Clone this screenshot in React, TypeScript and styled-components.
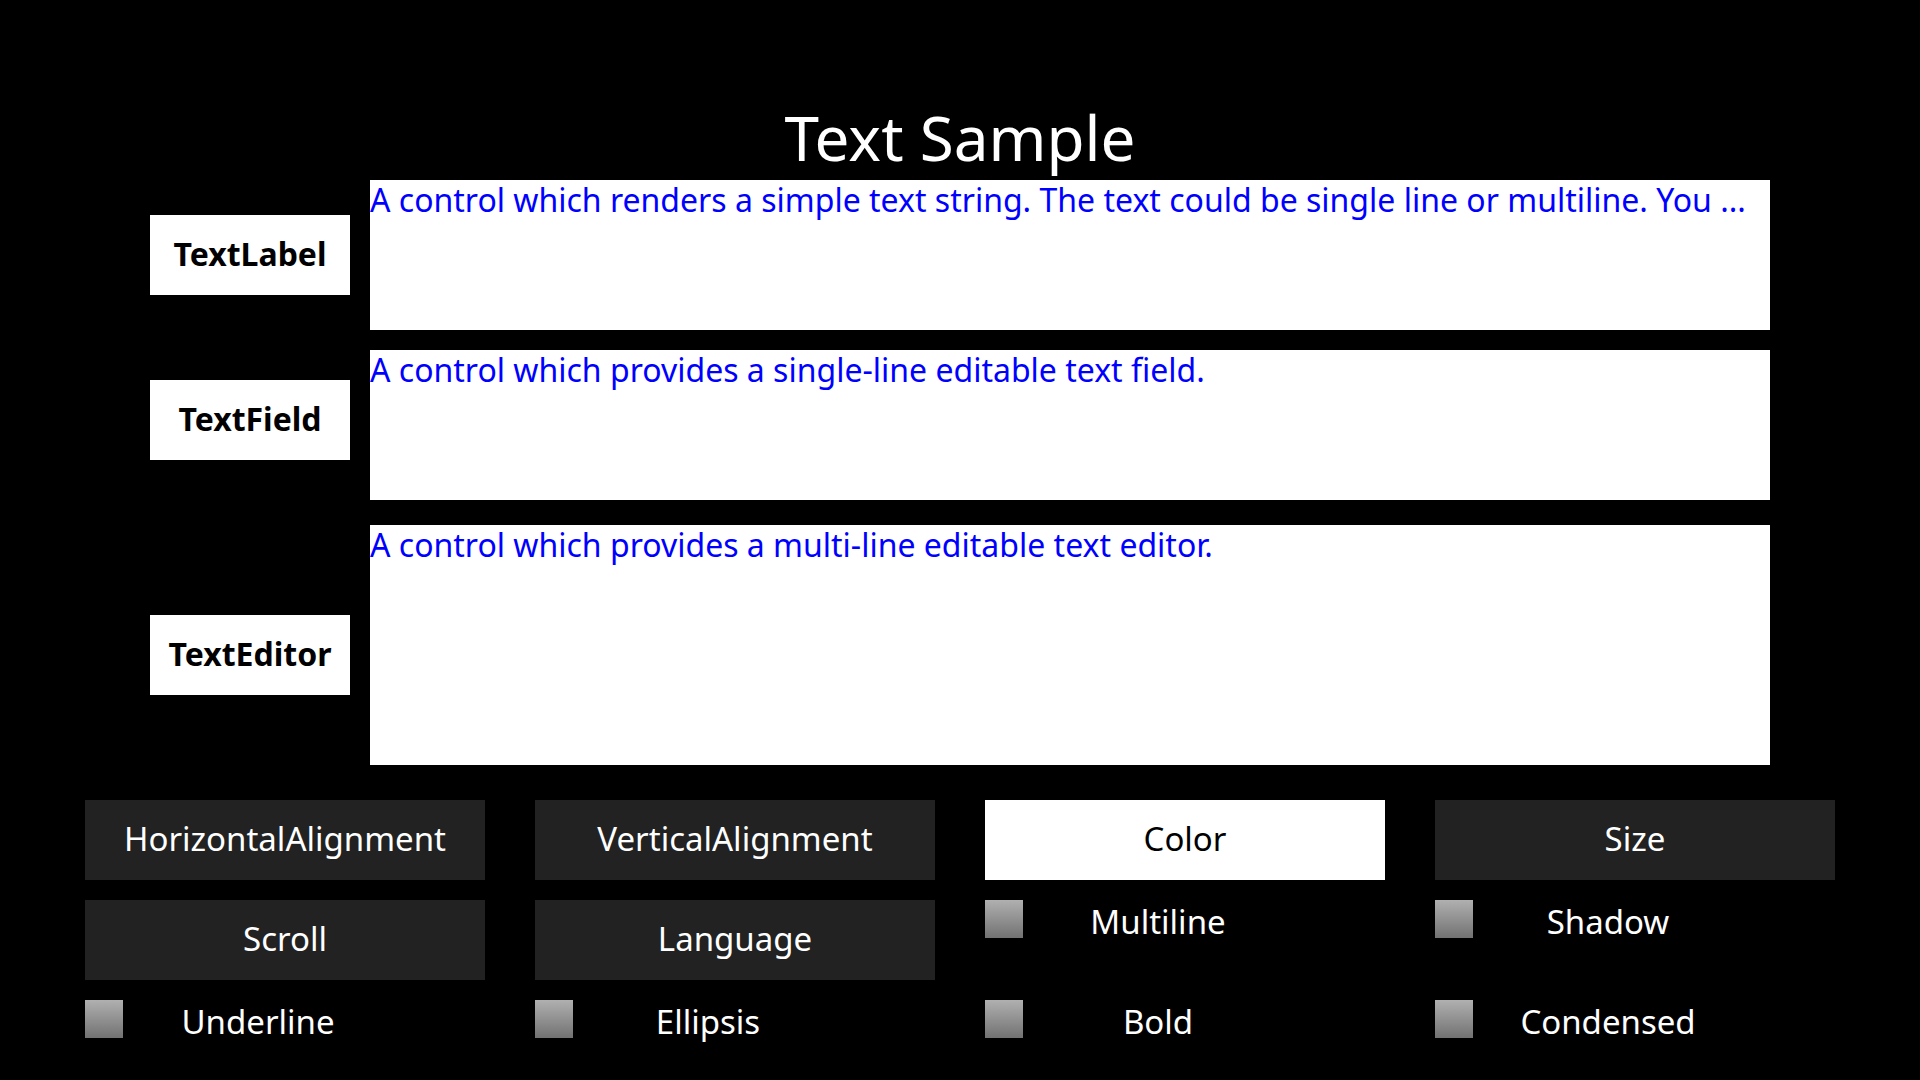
import React from "react";
import styled, { createGlobalStyle } from "styled-components";

const GlobalStyle = createGlobalStyle`
  html, body {
    margin: 0;
    padding: 0;
    background: #000;
  }
  body {
    font-family: "Noto Sans", "Open Sans", sans-serif;
  }
`;

const Page = styled.div`
  width: 1920px;
  height: 1080px;
  background: #000;
  box-sizing: border-box;
  padding-top: 94px;
  display: flex;
  flex-direction: column;
  overflow: hidden;
`;

const Title = styled.h1`
  margin: 0;
  text-align: center;
  color: #fff;
  font-weight: 400;
  font-size: 62px;
  line-height: 86px;
`;

const Samples = styled.div`
  display: flex;
  flex-direction: column;
  padding-left: 150px;
`;

const SampleRow = styled.div<{ $spaceAbove: number }>`
  display: flex;
  align-items: flex-start;
  gap: 20px;
  margin-top: ${(p) => p.$spaceAbove}px;
`;

const NameTag = styled.div<{ $offset: number }>`
  width: 200px;
  height: 80px;
  box-sizing: border-box;
  padding-bottom: 4px;
  margin-top: ${(p) => p.$offset}px;
  background: #fff;
  color: #000;
  font-weight: 700;
  font-size: 32px;
  display: flex;
  align-items: center;
  justify-content: center;
`;

const SampleBox = styled.div<{ $height: number }>`
  width: 1400px;
  height: ${(p) => p.$height}px;
  background: #fff;
  color: #0000ff;
  font-size: 32px;
  line-height: 40px;
  white-space: nowrap;
`;

const Controls = styled.div`
  margin-top: 35px;
  padding-left: 85px;
  display: grid;
  grid-template-columns: repeat(4, 400px);
  grid-template-rows: 80px 80px auto;
  column-gap: 50px;
  row-gap: 20px;
`;

const ControlButton = styled.div<{ $selected?: boolean }>`
  background: ${(p) => (p.$selected ? "#ffffff" : "#222222")};
  color: ${(p) => (p.$selected ? "#000000" : "#ffffff")};
  font-size: 33px;
  box-sizing: border-box;
  padding-bottom: 4px;
  display: flex;
  align-items: center;
  justify-content: center;
`;

const Toggle = styled.div`
  display: flex;
  align-items: flex-start;
`;

const Box = styled.div`
  width: 38px;
  height: 38px;
  flex: none;
  background: linear-gradient(#b0b0b0, #727272);
`;

const ToggleLabel = styled.div`
  width: 270px;
  text-align: center;
  color: #fff;
  font-size: 33px;
  line-height: 44px;
`;

const samples = [
  {
    name: "TextLabel",
    text: "A control which renders a simple text string. The text could be single line or multiline. You ...",
    height: 150,
    offset: 35,
    space: 0,
  },
  {
    name: "TextField",
    text: "A control which provides a single-line editable text field.",
    height: 150,
    offset: 30,
    space: 20,
  },
  {
    name: "TextEditor",
    text: "A control which provides a multi-line editable text editor.",
    height: 240,
    offset: 90,
    space: 25,
  },
];

type Cell = { kind: "button"; label: string; selected?: boolean } | { kind: "toggle"; label: string };

const cells: Cell[] = [
  { kind: "button", label: "HorizontalAlignment" },
  { kind: "button", label: "VerticalAlignment" },
  { kind: "button", label: "Color", selected: true },
  { kind: "button", label: "Size" },
  { kind: "button", label: "Scroll" },
  { kind: "button", label: "Language" },
  { kind: "toggle", label: "Multiline" },
  { kind: "toggle", label: "Shadow" },
  { kind: "toggle", label: "Underline" },
  { kind: "toggle", label: "Ellipsis" },
  { kind: "toggle", label: "Bold" },
  { kind: "toggle", label: "Condensed" },
];

export default function App() {
  return (
    <>
      <GlobalStyle />
      <Page>
        <Title>Text Sample</Title>
        <Samples>
          {samples.map((s) => (
            <SampleRow key={s.name} $spaceAbove={s.space}>
              <NameTag $offset={s.offset}>{s.name}</NameTag>
              <SampleBox $height={s.height}>{s.text}</SampleBox>
            </SampleRow>
          ))}
        </Samples>
        <Controls>
          {cells.map((c) =>
            c.kind === "button" ? (
              <ControlButton key={c.label} $selected={c.selected}>
                {c.label}
              </ControlButton>
            ) : (
              <Toggle key={c.label}>
                <Box />
                <ToggleLabel>{c.label}</ToggleLabel>
              </Toggle>
            )
          )}
        </Controls>
      </Page>
    </>
  );
}
